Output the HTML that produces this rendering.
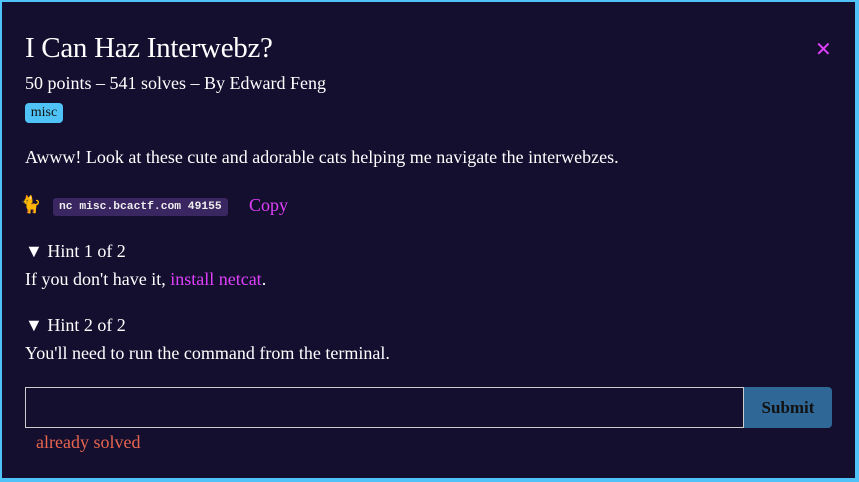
<!DOCTYPE html>
<html><head><meta charset="utf-8"><style>
html,body{margin:0;padding:0;}
body{width:859px;height:482px;overflow:hidden;background:#4fc3f7;font-family:"Liberation Serif",serif;color:#fff;}
.box{position:absolute;left:2px;top:2px;width:853px;height:476px;background:#140f2f;}
.a{position:absolute;white-space:nowrap;}
</style></head><body>
<div class="box"></div>
<div class="a" style="left:25px;top:32px;font-size:29px;letter-spacing:-0.3px;">I Can Haz Interwebz?</div>
<div class="a" style="left:815px;top:37px;font-size:20px;color:#e040fb;font-family:'DejaVu Sans',sans-serif;">✕</div>
<div class="a" style="left:25px;top:73px;font-size:18px;">50 points – 541 solves – By Edward Feng</div>
<div class="a" style="left:25px;top:103px;width:38px;height:20px;background:#4fc3f7;border-radius:4px;color:#111;font-size:14px;text-align:center;line-height:20px;">misc</div>
<div class="a" style="left:25px;top:147px;font-size:18px;">Awww! Look at these cute and adorable cats helping me navigate the interwebzes.</div>
<div class="a" style="left:20px;top:195px;font-size:17px;">🐈</div>
<div class="a" style="left:53px;top:198px;height:18px;padding:0 6px;background:#3a2660;border-radius:3px;font-family:'Liberation Mono',monospace;font-size:11.3px;font-weight:bold;line-height:18px;color:#eee;">nc misc.bcactf.com 49155</div>
<div class="a" style="left:249px;top:195px;font-size:18px;color:#e040fb;">Copy</div>
<div class="a" style="left:25px;top:241px;font-size:18px;">▼ Hint 1 of 2</div>
<div class="a" style="left:25px;top:269px;font-size:18px;">If you don't have it, <span style="color:#e040fb">install netcat</span>.</div>
<div class="a" style="left:25px;top:315px;font-size:18px;">▼ Hint 2 of 2</div>
<div class="a" style="left:25px;top:343px;font-size:18px;">You'll need to run the command from the terminal.</div>
<div class="a" style="left:25px;top:387px;width:717px;height:39px;border:1px solid #ccc;background:#140f2f;"></div>
<div class="a" style="left:744px;top:387px;width:88px;height:41px;background:#2f6796;border-radius:0 4px 4px 0;color:#111;font-weight:bold;font-size:17px;text-align:center;line-height:41px;">Submit</div>
<div class="a" style="left:36px;top:432px;font-size:18px;color:#e8654f;">already solved</div>
</body></html>
